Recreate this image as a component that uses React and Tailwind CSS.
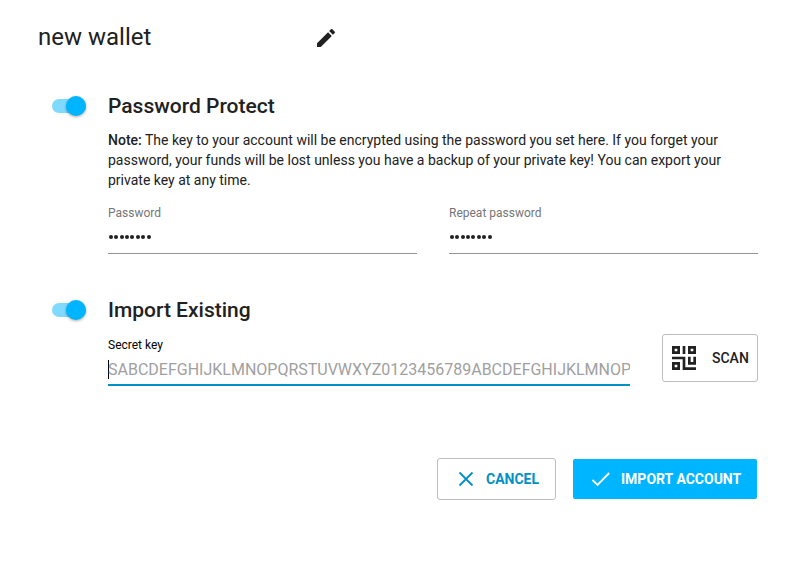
function Toggle() {
  return (
    <div className="relative h-[14px] w-[34px] shrink-0">
      <div className="h-[14px] w-[34px] rounded-full bg-[#80daff]" />
      <div className="absolute top-[-3px] right-0 size-5 rounded-full bg-[#00b5ff] shadow-[0_1px_3px_rgba(0,0,0,0.35)]" />
    </div>
  );
}

function PasswordField({ label }) {
  return (
    <div className="flex h-[50px] flex-1 flex-col border-b border-[#949494] pt-px">
      <span className="text-[12px] leading-4 text-[#757575]">{label}</span>
      <div className="mt-[14px] flex gap-[1.4px] pl-[0.8px]">
        {[0, 1, 2, 3, 4, 5, 6, 7].map((i) => (
          <span key={i} className="size-[4px] rounded-full bg-[#212121]" />
        ))}
      </div>
    </div>
  );
}

export default function App() {
  return (
    <main className="h-[576px] w-[794px] overflow-hidden bg-white pr-9 font-[Roboto,sans-serif] text-[#212121]">
      <header className="flex h-[76px] items-start pt-[20px] pl-[38px]">
        <h1 className="mt-px w-[276px] text-[24px] leading-8 whitespace-nowrap">new wallet</h1>
        <svg className="mt-[6px] size-6" viewBox="0 0 24 24" fill="currentColor">
          <path d="M3 17.25V21h3.75L17.81 9.94l-3.75-3.75L3 17.25zM20.71 7.04a1 1 0 0 0 0-1.41l-2.34-2.34a1 1 0 0 0-1.41 0l-1.83 1.83 3.75 3.75 1.83-1.83z" />
        </svg>
      </header>

      <section className="pl-[52px]">
        <div className="flex h-[60px] items-center gap-[22px]">
          <Toggle />
          <h2 className="text-[21px] leading-6 font-medium">Password Protect</h2>
        </div>
        <div className="-mt-[6px] pl-14">
          <p className="text-[14px] leading-5 whitespace-nowrap">
            <b className="font-medium">Note:</b> The key to your account will be encrypted using the password you set here. If you forget your
            <br />
            password, your funds will be lost unless you have a backup of your private key! You can export your
            <br />
            private key at any time.
          </p>
          <div className="mt-[14px] flex gap-8">
            <PasswordField label="Password" />
            <PasswordField label="Repeat password" />
          </div>
        </div>
      </section>

      <section className="mt-[26px] pl-[52px]">
        <div className="flex h-[60px] items-center gap-[22px]">
          <Toggle />
          <h2 className="text-[21px] leading-6 font-medium">Import Existing</h2>
        </div>
        <div className="-mt-[6px] flex gap-8 pl-14">
          <div className="mt-[3px] flex h-[49px] w-[522px] flex-col border-b-2 border-[#0290c9]">
            <span className="text-[12px] leading-4 text-black">Secret key</span>
            <div className="mt-[6px] flex h-5 items-center">
              <span className="h-[19px] w-px shrink-0 bg-black" />
              <span className="mt-[2px] -ml-px w-[522px] overflow-hidden text-[16px] leading-5 whitespace-nowrap text-[#a0a0a0]">SABCDEFGHIJKLMNOPQRSTUVWXYZ0123456789ABCDEFGHIJKLMNOP</span>
            </div>
          </div>
          <button className="flex h-12 w-24 items-center rounded-[3px] border border-[#bdbdbd] pl-[9px] text-[14px] font-medium">
            <svg className="mr-4 size-6" viewBox="0 0 9 9" fill="none" stroke="currentColor" strokeWidth="1">
              <path d="M.5 .5h2v2h-2zM6.5 .5h2v2h-2zM.5 6.5h2v2h-2zM4.5 0v3M0 4.5h4.5v4H9M6.5 4v2.5h2V4" />
            </svg>
            SCAN
          </button>
        </div>
      </section>

      <footer className="mt-[72px] flex items-center justify-end gap-[17px]">
        <button className="flex h-[42px] w-[119px] items-center rounded-[3px] border border-[#bdbdbd] pl-5 text-[14px] font-bold text-[#0290c9]">
          <svg className="mr-[12px] size-4" viewBox="0 0 16 16" fill="none" stroke="currentColor" strokeWidth="1.8">
            <path d="M1.5 1.5l13 13M14.5 1.5l-13 13" />
          </svg>
          CANCEL
        </button>
        <button className="mr-px flex h-10 w-[184px] items-center rounded-[2px] bg-[#00b5ff] pl-[18px] text-[14px] font-bold whitespace-nowrap text-white">
          <svg className="mr-[10px] h-5 w-5 shrink-0" viewBox="0 0 20 20" fill="none" stroke="currentColor" strokeWidth="1.8">
            <path d="M1.5 11l5 5L18.2 4" />
          </svg>
          IMPORT ACCOUNT
        </button>
      </footer>
    </main>
  );
}
